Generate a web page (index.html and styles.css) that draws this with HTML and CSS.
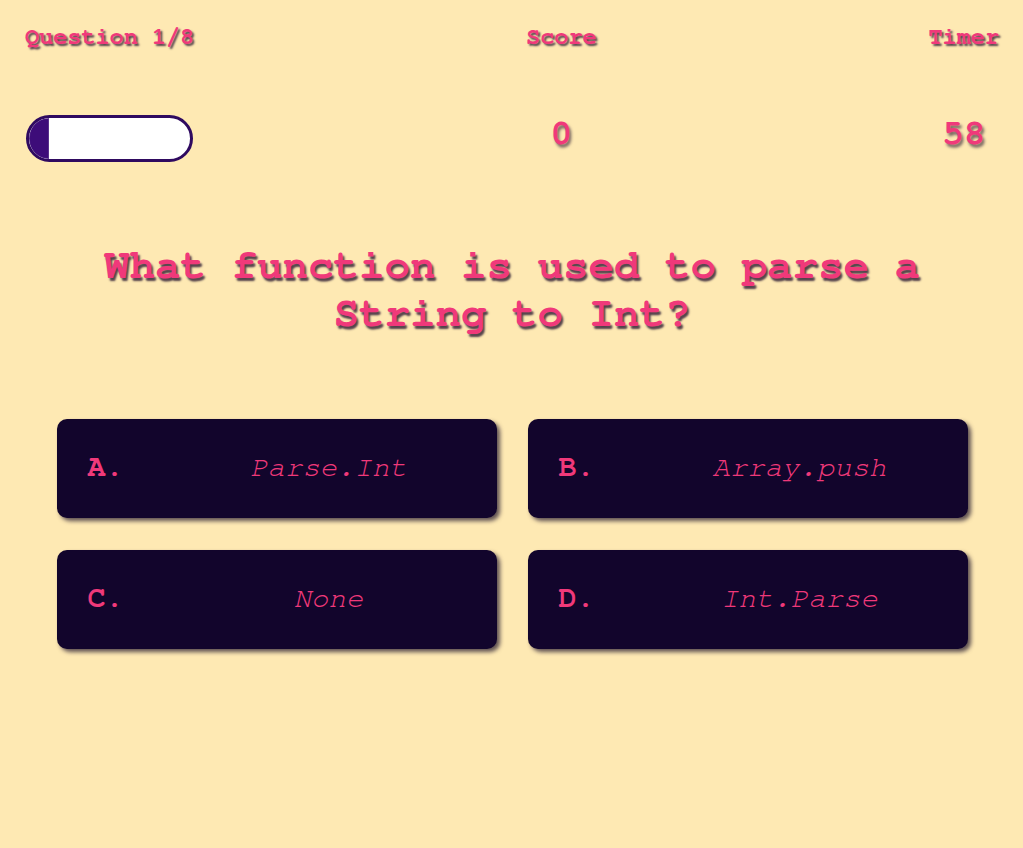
FILE: index.html
```html
<!DOCTYPE html>
<html lang="en">
<head>
<meta charset="utf-8">
<title>Quiz</title>
<link rel="stylesheet" href="styles.css">
</head>
<body>
<div class="page">
  <header class="hud">
    <div class="hud-col">
      <h2 class="hud-label">Question 1/8</h2>
      <div class="progress"><div class="progress-fill" style="width: 12.5%"></div></div>
    </div>
    <div class="hud-col">
      <h2 class="hud-label">Score</h2>
      <div class="hud-value">0</div>
    </div>
    <div class="hud-col">
      <h2 class="hud-label">Timer</h2>
      <div class="hud-value">58</div>
    </div>
  </header>

  <h1 class="question">What function is used to parse a String to Int?</h1>

  <div class="answers">
    <div class="answer"><span class="letter">A.</span><span class="text">Parse.Int</span></div>
    <div class="answer"><span class="letter">B.</span><span class="text">Array.push</span></div>
    <div class="answer"><span class="letter">C.</span><span class="text">None</span></div>
    <div class="answer"><span class="letter">D.</span><span class="text">Int.Parse</span></div>
  </div>
</div>
</body>
</html>
```

FILE: styles.css
```css
* { box-sizing: border-box; }

html, body {
  margin: 0;
  padding: 0;
  background: #fee9b3;
  height: 100%;
}

body {
  font-family: "Nimbus Mono PS", "Nimbus Mono L", "FreeMono", "Courier 10 Pitch", "Liberation Mono", monospace;
  color: #f0397a;
}

.page {
  padding: 24px 24px 0 25px;
}

.hud {
  display: flex;
  justify-content: space-between;
}

.hud-col {
  display: flex;
  flex-direction: column;
  align-items: center;
  gap: 64px;
}

.hud-label {
  margin: 0;
  font-size: 23.5px;
  font-weight: bold;
  line-height: 27px;
  text-shadow: 2px 2px 2px rgba(25, 10, 40, 0.75);
}

.progress {
  width: 167px;
  height: 47px;
  border: 3px solid #2f0a60;
  border-radius: 24px;
  background: #ffffff;
  overflow: hidden;
}

.progress-fill {
  height: 100%;
  background: #3d0c79;
  box-shadow: inset 0 0 0 1px rgba(255, 255, 255, 0.15);
  border-radius: 20px 0 0 20px;
}

.hud-value {
  font-size: 36px;
  font-weight: bold;
  line-height: 37px;
  text-shadow: 2px 3px 3px rgba(25, 10, 40, 0.6);
}

.question {
  margin: 80px 32px 0 32px;
  font-size: 42.5px;
  font-weight: bold;
  line-height: 48px;
  text-align: center;
  text-shadow: 2px 3px 2px rgba(25, 10, 40, 0.75);
}

.answers {
  margin: 81px 32px 0 32px;
  display: grid;
  grid-template-columns: 440px 440px;
  column-gap: 31px;
  row-gap: 32px;
  justify-content: center;
}

.answer {
  height: 99px;
  display: flex;
  align-items: center;
  padding: 0 31px 3px 31px;
  background: #12052c;
  border-radius: 10px;
  box-shadow: 3px 3px 4px rgba(40, 30, 50, 0.75);
}

.letter {
  width: 104px;
  flex: none;
  font-size: 30px;
  font-weight: bold;
}

.text {
  flex: 1;
  text-align: center;
  font-size: 29px;
  font-style: italic;
}
```
